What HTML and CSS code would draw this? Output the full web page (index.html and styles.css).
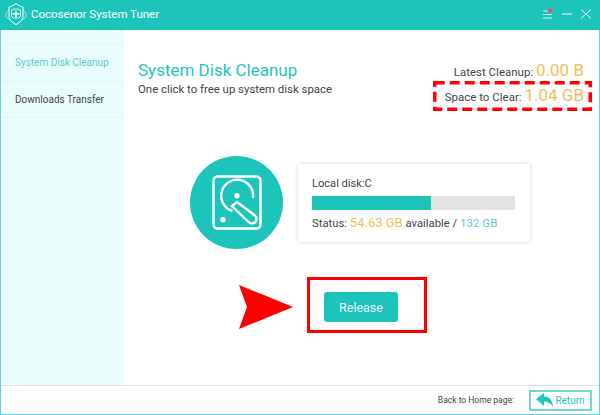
FILE: index.html
```html
<!DOCTYPE html>
<html lang="en">
<head>
  <meta charset="UTF-8" />
  <title>Cocosenor System Tuner</title>
  <link rel="stylesheet" href="styles.css">
</head>
<body>
  <div class="app">
    <header class="titlebar">
      <svg class="logo" width="24" height="24" viewBox="0 0 24 24" fill="none" stroke="#fff" stroke-width="1">
        <path d="M12 1.500c2.500 2 4.500 3 7 3.500v9c0 4-3 6.500-7 8.500-4-2-7-4.500-7-8.500V5c2.500-.5 4.500-1.500 7-3.500z"/>
        <rect x="7.500" y="7" width="9" height="9" rx="2.500" stroke-width=".8"/>
        <path d="M12 8.500v7M8.500 12h7" stroke-width="1.300"/>
        <path d="M4 9c-2 2-3 5-1 7l4 2.500M20 9c2 2 3 5 1 7l-4 2.500" stroke-width=".9" stroke="#bdf3ee"/>
      </svg>
      <span class="app-name">Cocosenor System Tuner</span>
      <div class="win-btns">
        <svg width="10" height="12" viewBox="0 0 10 12" stroke="#cdf5f1" stroke-width="1.200">
          <path d="M0 3h9M0 6.500h9M0 10h9"/>
          <circle cx="7" cy="2.500" r="2.200" fill="#f0526a" stroke="none"/>
        </svg>
        <svg width="10" height="12" viewBox="0 0 10 12" stroke="#cdf5f1" stroke-width="1.200"><path d="M0 6h10"/></svg>
        <svg width="10" height="10" viewBox="0 0 10 10" stroke="#e8ffff" stroke-width="1"><path d="M0 .5l10 9M10 .5L0 9.500"/></svg>
      </div>
    </header>

    <div class="body-row">
      <aside class="sidebar">
        <ul>
          <li class="active">System Disk Cleanup</li>
          <li>Downloads Transfer</li>
        </ul>
      </aside>

      <main class="content">
        <div class="top-row">
          <div>
            <h1>System Disk Cleanup</h1>
            <p class="sub">One click to free up system disk space</p>
          </div>
          <div class="stats">
            <div class="stat">Latest Cleanup: <b>0.00 B</b></div>
            <div class="stat">Space to Clear: <b>1.04 GB</b></div>
          </div>
        </div>

        <div class="disk-row">
          <div class="disk-circle">
            <svg width="50" height="55" viewBox="0 0 50 55" fill="none" stroke="#fff" stroke-width="2.400">
              <rect x="1.500" y="1.500" width="47" height="52" rx="4"/>
              <path d="M20.500 36a16 16 0 1 1 20.500-13"/>
              <circle cx="25" cy="20.700" r="2.700" fill="#fff" stroke="none"/>
              <circle cx="11" cy="44.700" r="2.700" fill="#fff" stroke="none"/>
              <path d="M25 27l-5 4 16.500 16c2.500 2.500 8 1.500 8-3 0-1.500-.5-2.500-1.500-3.500z"/>
            </svg>
          </div>
          <div class="disk-card">
            <div class="disk-name">Local disk:C</div>
            <div class="bar"><div class="bar-fill" style="width:58.500%"></div></div>
            <div class="disk-status">Status: <span class="free">54.63 GB</span> available / <span class="total">132 GB</span></div>
          </div>
        </div>

        <div class="action-row">
          <button class="release">Release</button>
        </div>

        <!-- red notes drawn over the screenshot -->
        <svg class="note-dashed" width="159" height="30" viewBox="0 0 159 30" fill="none" stroke="#f00" stroke-width="3.500" stroke-dasharray="10 5">
          <rect x="1.750" y="1.750" width="155.500" height="26.500"/>
        </svg>
        <div class="note-box"></div>
        <svg class="note-arrow" width="54" height="44" viewBox="0 0 54 44"><path d="M0 0l54 22L0 44 8 22z" fill="#f00"/></svg>
      </main>
    </div>

    <footer class="footer">
      <span class="back-label">Back to Home page:</span>
      <button class="return">
        <svg width="17" height="14" viewBox="0 0 17 14"><path d="M0 6L8 0v3.500c5 0 8 3 9 10-2-3-5-5-9-5V13z" fill="#1cc4bb"/></svg>
        Return
      </button>
    </footer>
  </div>
</body>
</html>
```

FILE: styles.css
```css
* { box-sizing: border-box; }
body {
  margin: 0;
  font-family: Roboto, sans-serif;
  color: #444;
  background: #fff;
}
.app {
  width: 600px;
  height: 415px;
  display: flex;
  flex-direction: column;
  border: 1px solid #5fd5e3;
  border-top: none;
}
.titlebar {
  height: 30px;
  margin: 0 -1px;
  flex: none;
  display: flex;
  align-items: center;
  gap: 3px;
  padding: 0 0 3px 4px;
  background: #1dc4ba;
  color: #fff;
}
.app-name {
  font-size: 11.500px;
}
.win-btns {
  margin-left: auto;
  display: flex;
  align-items: center;
  gap: 9px;
  padding-right: 9px;
}
.body-row {
  flex: 1;
  display: flex;
  min-height: 0;
}
.sidebar {
  width: 122px;
  margin-left: 1px;
  flex: none;
  background: #eafdfd;
  padding-top: 14px;
}
.sidebar ul {
  list-style: none;
  margin: 0;
  padding: 0;
  border-top: 1px solid #e4f3f3;
}
.sidebar li {
  height: 36.500px;
  line-height: 35px;
  padding-left: 13px;
  font-size: 10px;
  border-bottom: 1px solid #e4f3f3;
}
.sidebar li.active {
  color: #55cfc8;
}
.content {
  flex: 1;
  position: relative;
  padding: 30px 15px 0 14px;
}
.top-row {
  display: flex;
  justify-content: space-between;
}
h1 {
  margin: 0;
  font-size: 17px;
  font-weight: 400;
  line-height: 21px;
  color: #25c5bc;
}
.sub {
  margin: 1px 0 0;
  font-size: 11.400px;
  color: #444;
}
.stats {
  text-align: right;
  margin-top: -1px;
}
.stat {
  font-size: 11.500px;
  line-height: 23px;
}
.stat b {
  font-size: 17px;
  font-weight: 400;
  color: #f3bd5c;
}
.disk-row {
  display: flex;
  align-items: center;
  margin: 47px 0 0 52px;
}
.disk-circle {
  width: 93px;
  height: 93px;
  border-radius: 50%;
  background: #1dc4ba;
  display: flex;
  align-items: center;
  justify-content: center;
}
.disk-card {
  width: 232px;
  height: 78px;
  margin-left: 15px;
  padding: 13px 15px 0 14px;
  background: #fff;
  box-shadow: 0 0 4px rgba(0, 0, 0, 0.18);
}
.disk-name {
  font-size: 11.100px;
  line-height: 14px;
}
.bar {
  height: 14px;
  margin-top: 5px;
  background: #e3e3e3;
}
.bar-fill {
  height: 100%;
  background: #1dc4ba;
}
.disk-status {
  margin-top: 5px;
  font-size: 11.300px;
  line-height: 16px;
}
.free {
  font-size: 13px;
  color: #f3bd5c;
}
.total {
  font-size: 11.500px;
  color: #55cfc8;
}
.action-row {
  margin: 43px 0 0 186px;
}
.release {
  display: block;
  width: 74px;
  height: 30px;
  border: none;
  border-radius: 3px;
  background: #1dc4ba;
  color: #e6fbfa;
  font-family: inherit;
  font-size: 12.500px;
}
.footer {
  height: 29px;
  flex: none;
  display: flex;
  align-items: center;
  justify-content: flex-end;
  padding-right: 7px;
  border-top: 1px solid #e2e2e2;
}
.back-label {
  font-size: 8.500px;
  margin-right: 15px;
}
.return {
  width: 63px;
  height: 21px;
  display: flex;
  align-items: center;
  justify-content: center;
  gap: 2px;
  padding: 0;
  border: 2px solid #6fd8d3;
  background: #fff;
  color: #25c5bc;
  font-family: inherit;
  font-size: 10px;
}
.note-dashed {
  position: absolute;
  left: 309px;
  top: 51px;
}
.note-box {
  position: absolute;
  left: 183px;
  top: 247px;
  width: 120px;
  height: 56px;
  border: 3.500px solid #f00;
}
.note-arrow {
  position: absolute;
  left: 115px;
  top: 255px;
}
```
